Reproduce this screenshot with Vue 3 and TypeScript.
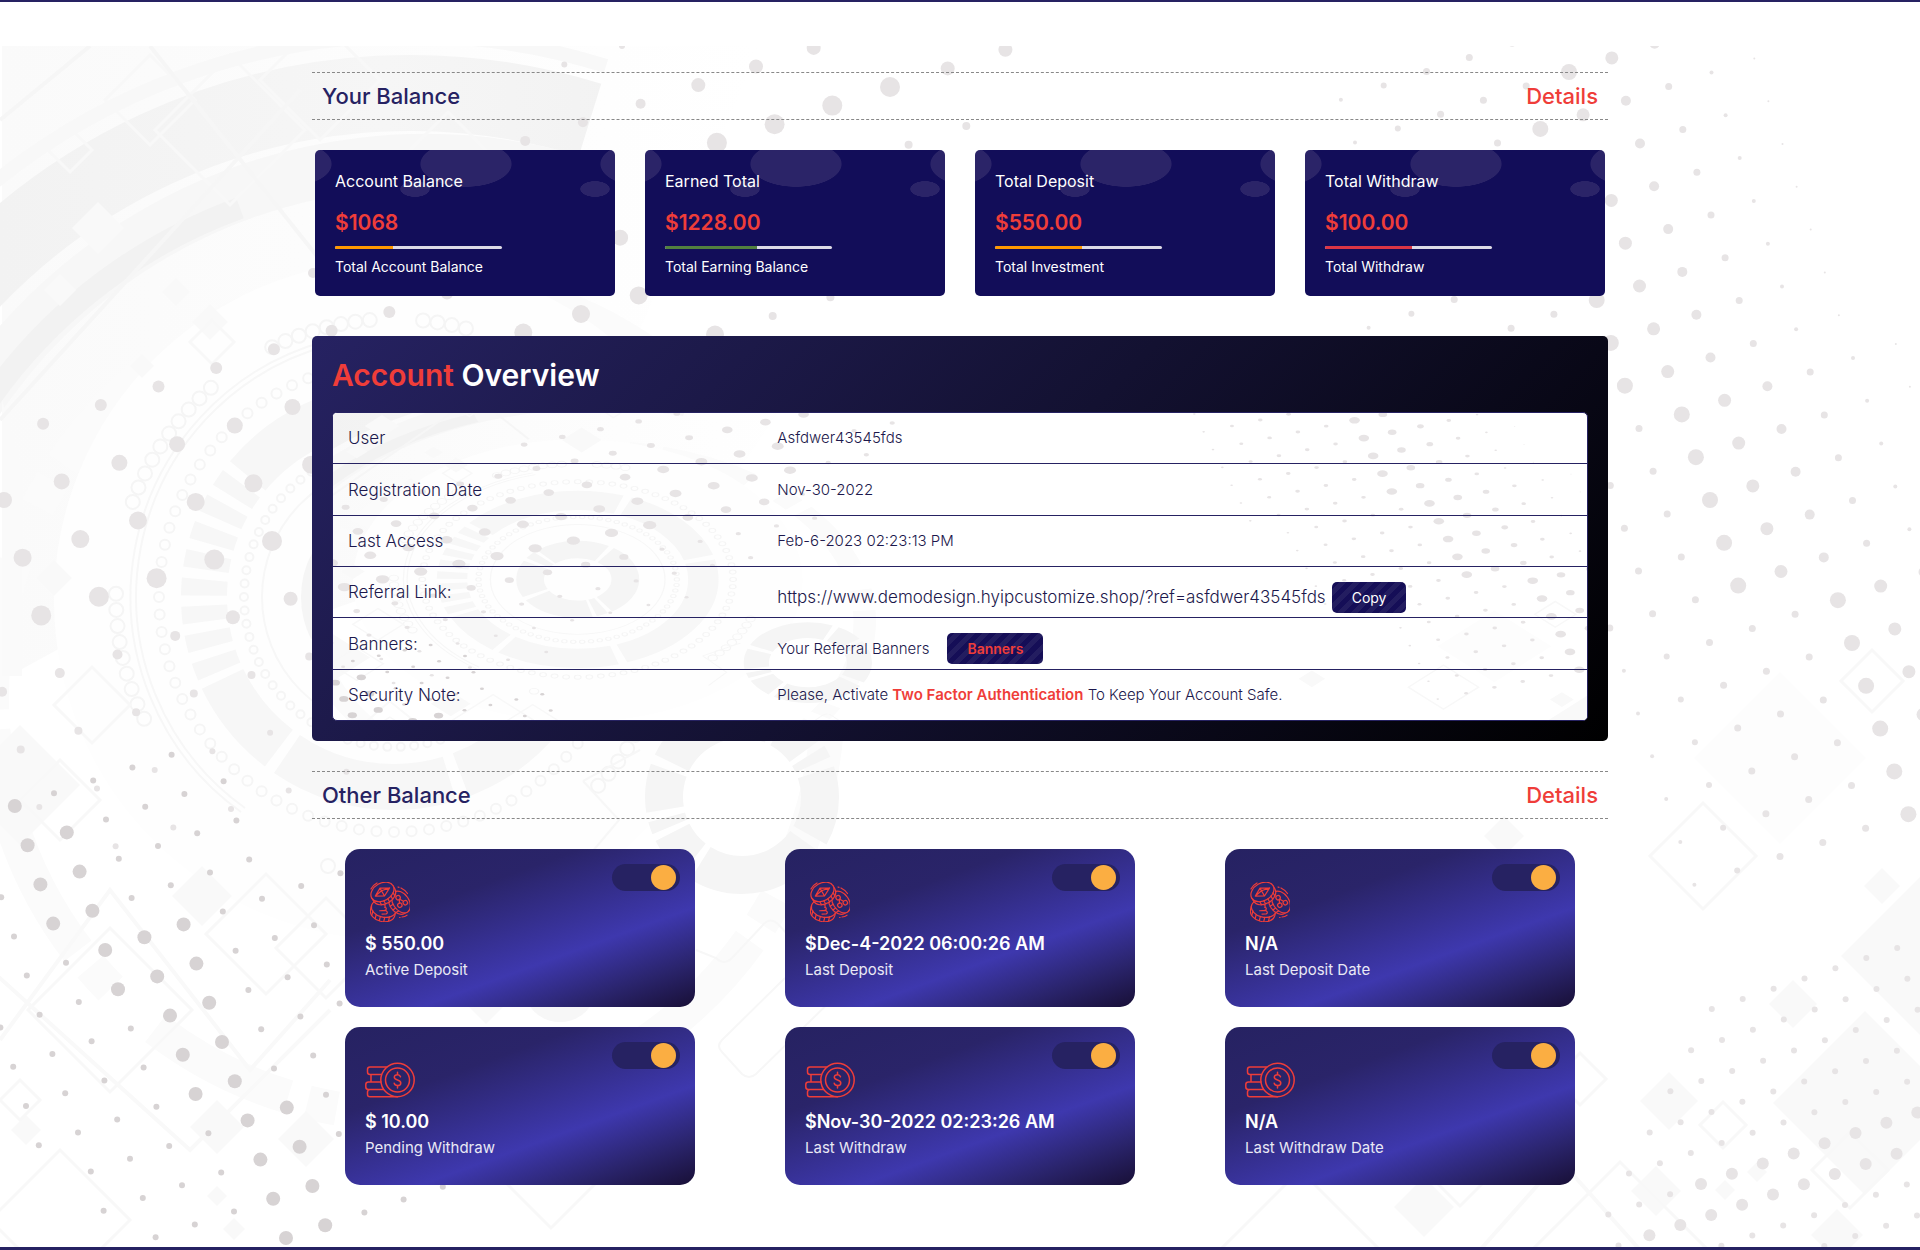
<script setup lang="ts">
interface Dot { x: number; y: number; r: number }
interface Stat { title: string; value: string; note: string; percent: number; color: string }
interface Balance { id: string; icon: 'coins' | 'stack'; value: string; label: string }

const stats: Stat[] = [
  { title: 'Account Balance', value: '$1068', note: 'Total Account Balance', percent: 35, color: '#ff9800' },
  { title: 'Earned Total', value: '$1228.00', note: 'Total Earning Balance', percent: 55, color: '#52803f' },
  { title: 'Total Deposit', value: '$550.00', note: 'Total Investment', percent: 52, color: '#ff9800' },
  { title: 'Total Withdraw', value: '$100.00', note: 'Total Withdraw', percent: 52, color: '#dc3545' },
]

const balances: Balance[] = [
  { id: 'active-deposit', icon: 'coins', value: '$ 550.00', label: 'Active Deposit' },
  { id: 'last-deposit', icon: 'coins', value: '$Dec-4-2022 06:00:26 AM', label: 'Last Deposit' },
  { id: 'last-deposit-date', icon: 'coins', value: 'N/A', label: 'Last Deposit Date' },
  { id: 'pending-withdraw', icon: 'stack', value: '$ 10.00', label: 'Pending Withdraw' },
  { id: 'last-withdraw', icon: 'stack', value: '$Nov-30-2022 02:23:26 AM', label: 'Last Withdraw' },
  { id: 'last-withdraw-date', icon: 'stack', value: 'N/A', label: 'Last Withdraw Date' },
]

const referralUrl = 'https://www.demodesign.hyipcustomize.shop/?ref=asfdwer43545fds'

function copyLink(): void {
  navigator.clipboard?.writeText(referralUrl)
}

// Halftone dots sit on slanted square lattices: a steps along a row, b steps between rows.
function place(ox: number, oy: number, ux: number, uy: number, a: number, b: number, r: number): Dot {
  return { x: ox + a * ux + b * uy, y: oy - a * uy + b * ux, r }
}

const softDots: Dot[] = []
const leftRows: [number, number, number, number][] = [
  [-6, 7, 8, 3], [-5, 6, 8, 5], [-5, 9, 12, 7], [-4, 2, 8, 5], [-4, 9, 12, 10], [-4, 13, 14, 7],
  [-3, -4, 6, 6], [-3, 7, 11, 8], [-3, 12, 13, 4], [-2, -4, 4, 8], [-2, 5, 8, 9], [-2, 9, 11, 4],
  [-1, -5, 8, 9], [-1, 9, 10, 4], [0, -5, 4, 10], [0, 5, 7, 8], [0, 8, 9, 4],
  [1, -5, -2, 5], [1, -1, 3, 7], [1, 4, 8, 4], [2, -5, 6, 4], [3, -5, 4, 3], [4, -4, 0, 3],
]
for (const [b, from, to, r] of leftRows) {
  for (let a = from; a <= to; a++) softDots.push(place(272, 541, 57.7, 18.6, a, b, r))
}
const rightSizes = [2, 3, 3.5, 3.5, 3.5, 8, 6.5, 5, 3.5, 2, 1]
for (let b = -1; b <= 18; b++) {
  const start = b >= 13 ? 2 : b >= 8 || b < 1 ? 0 : -1
  rightSizes.forEach((r, i) => softDots.push(place(1569, 72, 42.8, 14.1, start - 5 + i, b, r)))
}
for (let b = -5; b <= 4; b++) {
  for (let a = -3 - b; a <= 10; a++) {
    const r = b === 0 || b === 1 ? (a < 0 - b * 2 ? 3 : 6) : 3
    softDots.push(place(1701, 1184, 30.9, 10.2, a, b, r))
  }
}

const darkDots: Dot[] = []
const cornerStarts: Record<number, [number, number]> = {
  [-7]: [-3, -3], [-6]: [-3, -2], [-5]: [-3, -2], [-4]: [-3, -2], [-3]: [-2, 0], [-2]: [-2, 0],
  [-1]: [-1, 0], 0: [-1, 0], 1: [-1, 0], 2: [0, 1], 3: [0, 1], 4: [0, 1], 5: [0, 1],
}
for (const key of Object.keys(cornerStarts)) {
  const b = Number(key)
  const [from, to] = cornerStarts[b]
  for (let a = from - 4; a <= to + 4; a++) {
    darkDots.push(place(222, 1042, 39.2, 12.8, a, b, a >= from && a <= to ? 7 : 3))
  }
}

function ring(cx: number, cy: number, radius: number, count: number, r: number, from = 0, to = 360): Dot[] {
  const out: Dot[] = []
  for (let i = 0; i < count; i++) {
    const t = ((from + ((to - from) * i) / count) * Math.PI) / 180
    out.push({ x: cx + radius * Math.cos(t), y: cy + radius * Math.sin(t), r })
  }
  return out
}
const beads: Dot[] = [
  ...ring(394, 597, 278, 9, 7, 154, 184),
  ...ring(394, 597, 278, 10, 7, 200, 232),
  ...ring(394, 597, 278, 8, 7, 244, 268),
  ...ring(394, 597, 278, 4, 7, 276, 288),
  ...ring(394, 597, 278, 8, 7, 20, 46),
  ...ring(394, 597, 235, 84, 5),
  ...ring(394, 597, 150, 70, 4),
]

const filled: [number, number, number][] = [
  [1504, 836, 20], [1882, 886, 18], [1793, 1004, 24], [1669, 1101, 29], [1865, 1103, 92], [1921, 956, 80],
  [1424, 1207, 30], [1656, 1191, 25], [1725, 1190, 10], [1757, 1172, 10], [1837, 1235, 26], [217, 1127, 27], [202, 896, 30],
  [306, 1139, 28], [26, 1130, 15], [217, 1196, 10], [486, 990, 34], [98, 228, 26], [60, 290, 16], [176, 292, 14],
  [210, 322, 18], [142, 366, 12], [54, 578, 18], [20, 785, 60], [234, 1229, 11], [400, 262, 30],
]
const outlined: [number, number, number][] = [
  [1703, 856, 53], [1872, 681, 31], [1723, 1125, 23], [1580, 1079, 26], [92, 705, 38], [266, 934, 60],
  [110, 1010, 82], [551, 1170, 58], [326, 948, 50], [70, 150, 22], [230, 130, 75], [150, 100, 45], [212, 342, 22],
  [320, 80, 60], [448, 160, 48], [20, 1100, 20], [60, 1220, 70], [60, 800, 40], [1460, 1172, 34],
  [1620, 1250, 88], [1300, 1260, 90], [1850, 1170, 38],
]
function diamond([x, y, r]: [number, number, number]): string {
  return `M${x} ${y - r}L${x + r} ${y}L${x} ${y + r}L${x - r} ${y}Z`
}
const filledPath = filled.map(diamond).join('')
const outlinedPath = outlined.map(diamond).join('')
</script>

<template>
  <div class="page">
    <svg class="backdrop" viewBox="0 46 1920 1201" preserveAspectRatio="xMidYMin slice" aria-hidden="true">
      <defs>
        <linearGradient id="fade" gradientUnits="userSpaceOnUse" x1="0" y1="0" x2="640" y2="0">
          <stop offset="0" stop-color="#f2f2f2" />
          <stop offset="0.6" stop-color="#f6f6f6" />
          <stop offset="1" stop-color="#f2f2f2" />
        </linearGradient>
        <linearGradient id="wash" x1="0" y1="0" x2="1" y2="0">
          <stop offset="0" stop-color="#fafafa" />
          <stop offset="1" stop-color="#ffffff" />
        </linearGradient>
        <g id="art">
          <path d="M2 46H760L640 330L2 680Z" fill="url(#wash)" />
          <g fill="none">
            <path d="M-150 345A660 660 0 0 1 606 66" stroke="#f8f8f8" stroke-width="14" />
            <path d="M-146 460A606 606 0 0 1 590 120" stroke="url(#fade)" stroke-width="76" />
            <path d="M-96 560A540 540 0 0 1 560 178" stroke="#f7f7f7" stroke-width="54" />
            <path d="M-100 620A525 525 0 0 1 240 208" stroke="#f2f2f2" stroke-width="22" />
            <circle cx="410" cy="697" r="418" stroke="#fbfbfb" stroke-width="34" stroke-dasharray="150 60 30 20" />
            <path d="M2 400V676H22V470Z" fill="#fafafa" />
          </g>
          <circle cx="394" cy="600" r="340" fill="#fefefe" />
          <g fill="none" stroke="#f7f7f7">
            <path d="M245 808A260 260 0 0 1 330 345" stroke-width="2" />
            <path d="M241 812A265 265 0 0 1 326 341" stroke-width="2" />
            <circle cx="394" cy="597" r="190" stroke-width="46" stroke-dasharray="230 12 170 10 90 8 16 10 16 10 16 10 16 10 16 10 16 10 16 10 16 10" />
            <circle cx="394" cy="597" r="132" stroke-width="2" />
            <circle cx="394" cy="597" r="72" stroke-width="42" stroke="#f5f5f5" stroke-dasharray="70 6 14 5 90 7" />
            <circle cx="742" cy="797" r="78" stroke-width="38" stroke="#f5f5f5" stroke-dasharray="40 8 118 8 34 6 10 8" />
            <circle cx="560" cy="985" r="28" stroke-width="18" />
            <g stroke-width="2" stroke="#f5f5f5">
              <circle v-for="(d, i) in beads" :key="i" :cx="d.x" :cy="d.y" :r="d.r" />
              <circle cx="328" cy="866" r="7" />
            </g>
          </g>
          <path :d="filledPath" fill="#f9f9f9" />
          <path d="M1780 672L1866 758L1780 844L1694 758Z" fill="#fdfdfd" />
          <path :d="outlinedPath" fill="none" stroke="#f8f8f8" stroke-width="3" />
          <g fill="none" stroke="#f7f7f7" stroke-width="2">
            <path d="M583 781L619 820L592 852M640 750L583 781" />
            <path d="M696 950L716 958Q724 966 732 958L762 926Q770 916 778 924L800 948M785 978L722 1040Q716 1046 722 1052L742 1074Q749 1080 756 1074L850 982" />
            <path d="M0 1040L110 890L250 1070L330 980M-20 960L190 1150L330 1010M1480 1250L1560 1160L1640 1250" stroke="#f9f9f9" stroke-width="4" />
            <path d="M0 120L90 46M0 420L200 200L300 90M150 46L320 260" stroke="#f6f6f6" stroke-width="4" />
          </g>
          <g fill="#e7e4e5">
            <circle v-for="(d, i) in softDots" :key="i" :cx="d.x" :cy="d.y" :r="d.r" />
          </g>
          <g fill="#d7d3d4">
            <circle v-for="(d, i) in darkDots" :key="i" :cx="d.x" :cy="d.y" :r="d.r" />
          </g>
        </g>
      </defs>
      <use href="#art" />
    </svg>

    <main class="container">
      <header class="section-head">
        <h2>Your Balance</h2>
        <a href="#details">Details</a>
      </header>

      <section class="stats">
        <article v-for="s in stats" :key="s.title" class="stat">
          <h3>{{ s.title }}</h3>
          <p class="amount">{{ s.value }}</p>
          <div class="bar"><span class="fill" :style="{ width: s.percent + '%', background: s.color }"></span></div>
          <p class="note">{{ s.note }}</p>
        </article>
      </section>

      <section class="overview">
        <h2><span>Account</span> Overview</h2>
        <div class="sheet">
          <svg class="sheet-art" viewBox="24 197 1896 738" preserveAspectRatio="none" aria-hidden="true">
            <use href="#art" />
          </svg>
          <table>
            <tbody>
              <tr>
                <th scope="row">User</th>
                <td>Asfdwer43545fds</td>
              </tr>
              <tr>
                <th scope="row">Registration Date</th>
                <td>Nov-30-2022</td>
              </tr>
              <tr>
                <th scope="row">Last Access</th>
                <td>Feb-6-2023 02:23:13 PM</td>
              </tr>
              <tr>
                <th scope="row">Referral Link:</th>
                <td class="action">
                  <div class="line">
                    <span class="url">{{ referralUrl }}</span>
                    <button type="button" class="btn" @click="copyLink">Copy</button>
                  </div>
                </td>
              </tr>
              <tr>
                <th scope="row">Banners:</th>
                <td class="action">
                  <div class="line wide">
                    <span>Your Referral Banners</span>
                    <a class="btn hot" href="#banners">Banners</a>
                  </div>
                </td>
              </tr>
              <tr>
                <th scope="row">Security Note:</th>
                <td>Please, Activate <a class="secure" href="#security">Two Factor Authentication</a> To Keep Your Account Safe.</td>
              </tr>
            </tbody>
          </table>
        </div>
      </section>

      <header class="section-head">
        <h2>Other Balance</h2>
        <a href="#other-details">Details</a>
      </header>

      <section class="balances">
        <article v-for="b in balances" :key="b.id" class="balance">
          <input class="toggle" type="checkbox" checked :aria-labelledby="b.id" />
          <svg v-if="b.icon === 'coins'" class="icon coins" viewBox="0 0 40 40" aria-hidden="true">
            <g transform="rotate(14 13 28)">
              <path d="M.8 26v4.500c0 5 5.500 9 12.500 9s12.500-4 12.500-9V26" />
              <ellipse cx="13.300" cy="26.500" rx="12.500" ry="8.500" />
              <path d="M3.500 31.500v4M7.500 34v4M12 35v4.300M16.500 34.800v4.200M21 33v4" />
              <path d="M10 29.500l4.500-1.500c2.500-1 1.500-3.500-.5-3 1-2-1-3-3-2.300M14.500 28c2.500-.6 4.500 1.500 2.500 3l-4 1.200" />
            </g>
            <g transform="rotate(56 31 20)">
              <path d="M19 20v3.500c0 4.600 5 8 11.500 8S42 28 42.500 23.500V20" />
              <ellipse cx="31" cy="20" rx="12" ry="8" />
              <path d="M24 27v3M28.500 28.200v3.200M33 28.200v3M37 27v3" />
              <circle cx="25.800" cy="20" r="2.200" />
              <circle cx="33" cy="22.800" r="2.200" />
              <circle cx="34" cy="16.800" r="2.200" />
              <path d="M28 20l3.200 2M28 19.500l3.800-2" />
            </g>
            <g transform="rotate(-30 12.500 10.500)">
              <path d="M.5 10v3.500c0 5 5.500 8.800 12.300 8.800S25 18.500 25 13.500V10" />
              <ellipse cx="12.700" cy="10" rx="12.300" ry="8.800" />
              <path d="M5.500 17.200v3.300M9.500 18.600v3.500M14 18.800v3.500M18 17.800v3.500M21.500 16v3.300" />
              <path d="M4.500 10l8-4.500 8.500 4.500-8.500 4.500zM12.500 5.500v9M4.500 10l8-1.500L21 10" />
            </g>
            <path d="M1 7c1-2 3-4.500 6-6M28 5l1 .4M31 6c3 1.500 5 3 6.500 5.500M29.500 35.500h.6M32 35c2-.2 3.500-.7 5-1.800" />
          </svg>
          <svg v-else class="icon stack" viewBox="0 0 50 35" aria-hidden="true">
            <circle cx="32.500" cy="17.500" r="16.700" />
            <circle cx="32.500" cy="17.500" r="12" />
            <path d="M21.500 4.500H5Q2.500 4.500 2.500 7v2.500Q2.500 12 5 12h11.500M6 12v7.500M16 19.500H3.500Q.8 19.500 .8 22v2.500Q.8 27 3.500 27H18.500M5 27Q2.500 27 2.500 29.500V32q0 2.300 2.500 2.300h27.500" />
            <path d="M35.500 14.200c-.5-1.500-1.600-2-3-2-1.900 0-3.200 1-3.200 2.600 0 3.600 6.500 1.800 6.500 5.600 0 1.600-1.400 2.600-3.300 2.600-1.600 0-3-.7-3.300-2.300M32.500 9.800v2.400M32.500 23v2.400" />
          </svg>
          <p class="value">{{ b.value }}</p>
          <p :id="b.id" class="label">{{ b.label }}</p>
        </article>
      </section>
    </main>
  </div>
</template>

<style>
body {
  margin: 0;
  background: #fff;
}
</style>

<style scoped>
.page {
  position: relative;
  box-sizing: border-box;
  min-height: 100vh;
  border-top: 2px solid #262262;
  border-bottom: 3px solid #262262;
  font-family: Inter, "Liberation Sans", sans-serif;
  color: #262262;
  overflow: hidden;
}
.backdrop {
  position: absolute;
  top: 44px;
  left: 0;
  width: 100%;
  height: calc(100% - 44px);
}
.container {
  position: relative;
  box-sizing: border-box;
  max-width: 1296px;
  margin: 0 auto;
  padding: 70px 0 60px;
}
h2, h3, p {
  margin: 0;
}
a {
  color: #ef3d39;
  text-decoration: none;
}
.section-head {
  box-sizing: border-box;
  display: flex;
  align-items: center;
  justify-content: space-between;
  height: 48px;
  padding: 0 10px;
  border-top: 1px dashed #888;
  border-bottom: 1px dashed #888;
  font-size: 22px;
  line-height: 30px;
  font-weight: 500;
}
.section-head h2 {
  font-size: 22px;
  font-weight: 500;
}
.stats {
  display: grid;
  grid-template-columns: repeat(4, 1fr);
  gap: 30px;
  padding: 0 3px;
  margin: 30px 0 40px;
}
.stat {
  padding: 20px;
  border-radius: 5px;
  color: #fff;
  background-color: #120d59;
  background-image:
    radial-gradient(ellipse 46px 23px at 71px 14px, #2b2468 98%, transparent 100%),
    radial-gradient(ellipse 15px 8px at 20px 39px, #2b2468 96%, transparent 100%);
  background-size: 180px 146px;
  background-position: 80px 0;
  background-repeat: repeat-x;
}
.stat h3 {
  font-size: 16px;
  line-height: 22px;
  font-weight: 400;
}
.amount {
  margin-top: 19px;
  font-size: 21px;
  line-height: 24px;
  font-weight: 600;
  color: #ef3d39;
}
.bar {
  width: 167px;
  height: 3px;
  margin: 11px 0 8px;
  border-radius: 2px;
  background: #dcd9e6;
  overflow: hidden;
}
.fill {
  display: block;
  height: 100%;
}
.note {
  font-size: 14px;
  line-height: 19px;
}
.overview {
  padding: 20px;
  margin-bottom: 30px;
  border-radius: 5px;
  background: linear-gradient(135deg, #262262, #000);
}
.overview h2 {
  margin-bottom: 18px;
  font-size: 30px;
  line-height: 38px;
  font-weight: 600;
  color: #fff;
}
.overview h2 span {
  color: #ef3d39;
}
.sheet {
  position: relative;
  border: 1px solid #262262;
  border-radius: 5px;
  background: #fff;
  overflow: hidden;
}
.sheet-art {
  position: absolute;
  top: 0;
  left: 0;
  width: 100%;
  height: 100%;
}
table {
  position: relative;
  width: 100%;
  border-spacing: 0;
  text-align: left;
  color: #1c184c;
}
tr {
  height: 51px;
}
tr:nth-child(3n + 2) {
  height: 52px;
}
tr:last-child {
  height: 50px;
}
th, td {
  box-sizing: border-box;
  padding: 0 15px;
  border-bottom: 1px solid #262262;
  line-height: 20px;
}
tr:last-child > * {
  border-bottom: 0;
}
th {
  width: 34%;
  font-size: 17px;
  font-weight: 300;
}
td {
  padding-left: 18px;
  font-size: 15px;
  font-weight: 300;
}
td.action {
  padding-top: 10px;
}
.line {
  display: flex;
  align-items: center;
  gap: 6px;
}
.line.wide {
  gap: 18px;
}
.url {
  font-size: 17px;
}
.secure {
  font-weight: 600;
}
.btn {
  padding: 6px 20px;
  border: 0;
  border-radius: 5px;
  font-family: inherit;
  font-size: 14px;
  line-height: 19px;
  font-weight: 400;
  color: #fff;
  background: repeating-linear-gradient(135deg, #150e57 0, #150e57 5px, #231d60 5px, #231d60 10px);
}
.btn.hot {
  font-weight: 600;
  color: #ef3d39;
}
.balances {
  display: grid;
  grid-template-columns: repeat(3, 1fr);
  gap: 20px 90px;
  padding: 0 33px;
  margin-top: 30px;
}
.balance {
  position: relative;
  box-sizing: border-box;
  height: 158px;
  padding: 33px 20px 20px;
  border-radius: 15px;
  color: #fff;
  background: linear-gradient(160deg, #262262 0%, #2a2469 30%, #3e38ae 65%, #2a246c 84%, #180f36 100%);
}
.toggle {
  position: absolute;
  top: 15px;
  right: 15px;
  box-sizing: border-box;
  display: flex;
  align-items: center;
  justify-content: flex-end;
  width: 68px;
  height: 27px;
  margin: 0;
  padding-right: 4px;
  border-radius: 14px;
  background: #262262;
  appearance: none;
}
.toggle::before {
  content: "";
  width: 25px;
  height: 25px;
  border-radius: 50%;
  background: #fbae42;
}
.icon {
  display: block;
  height: 40px;
  fill: none;
  stroke: #ef3d39;
  stroke-linecap: round;
  stroke-linejoin: round;
}
.coins {
  width: 40px;
  margin-left: 5px;
  stroke-width: 1.2;
}
.coins g {
  fill: #29246a;
}
.stack {
  width: 50px;
  stroke-width: 1.5;
}
.value {
  margin-top: 10px;
  font-size: 18px;
  line-height: 24px;
  font-weight: 600;
}
.label {
  margin-top: 2px;
  font-size: 15px;
  line-height: 24px;
  color: #e9e9f5;
}
</style>
